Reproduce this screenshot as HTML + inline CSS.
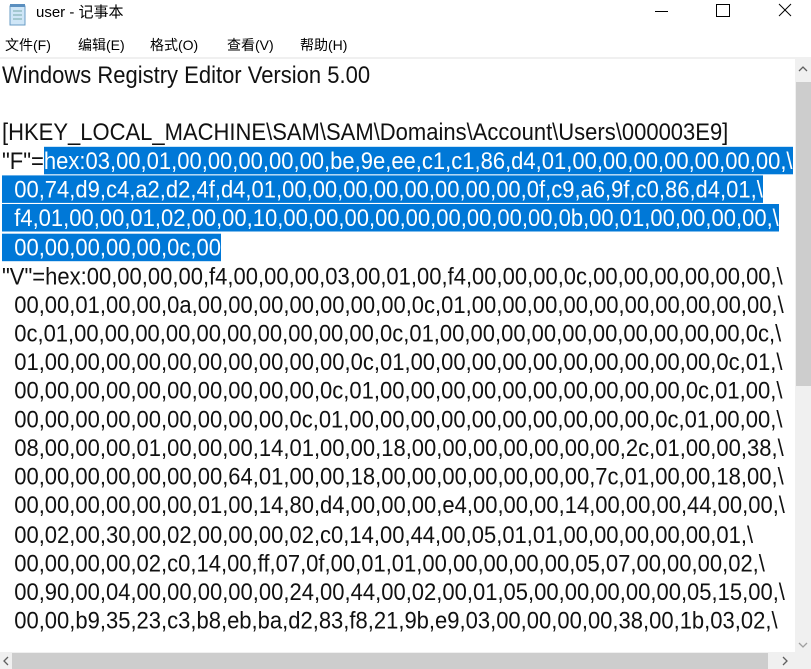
<!DOCTYPE html>
<html><head><meta charset="utf-8">
<style>
*{margin:0;padding:0;box-sizing:border-box}
body{width:811px;height:669px;background:#fff;position:relative;overflow:hidden;font-family:"Liberation Sans","Noto Sans CJK SC",sans-serif}
.title{position:absolute;left:36px;top:1px;font-size:15px;color:#000;line-height:24px}
.menu{position:absolute;top:35px;font-size:14px;color:#000;line-height:20px}
.sep{position:absolute;left:0;top:57px;width:811px;height:2px;background:#f0f0f0}
.ed{position:absolute;left:2px;top:61px;font-size:22px;line-height:26.1px;white-space:pre;color:#111;transform:scaleY(1.1);transform-origin:0 0}
.sel{background:#0078d7;color:#fff}
.vs{position:absolute;left:795px;top:59px;width:16px;height:593px;background:#f0f0f0}
.vt{position:absolute;left:796px;top:82px;width:15px;height:304px;background:#cdcdcd}
.hs{position:absolute;left:0;top:652px;width:795px;height:17px;background:#f0f0f0}
.ht{position:absolute;left:12px;top:653px;width:756px;height:16px;background:#cdcdcd}
.corner{position:absolute;left:795px;top:652px;width:16px;height:17px;background:#f0f0f0}
</style></head><body>
<svg style="position:absolute;left:8px;top:4px" width="20" height="22" viewBox="0 0 20 22">
<rect x="2" y="2" width="15" height="19" fill="#cfe6f7" stroke="#6a9cc4"/>
<line x1="5" y1="7" x2="14" y2="7" stroke="#7aa" /><line x1="5" y1="11" x2="14" y2="11" stroke="#7aa"/><line x1="5" y1="15" x2="14" y2="15" stroke="#7aa"/>
<rect x="2" y="0" width="15" height="3" fill="#5b8fbf"/>
</svg>
<div class="title">user - 记事本</div>
<svg style="position:absolute;left:650px;top:0" width="161" height="24">
<line x1="5" y1="11.5" x2="18" y2="11.5" stroke="#000" stroke-width="1"/>
<rect x="66.5" y="4.5" width="13" height="12" fill="none" stroke="#000"/>
<line x1="129" y1="4" x2="141" y2="16" stroke="#000"/><line x1="141" y1="4" x2="129" y2="16" stroke="#000"/>
</svg>
<div class="menu" style="left:5px">文件(F)</div>
<div class="menu" style="left:78px">编辑(E)</div>
<div class="menu" style="left:150px">格式(O)</div>
<div class="menu" style="left:227px">查看(V)</div>
<div class="menu" style="left:300px">帮助(H)</div>
<div class="sep"></div>
<div class="ed">Windows Registry Editor Version 5.00

[HKEY_LOCAL_MACHINE\SAM\SAM\Domains\Account\Users\000003E9]
"F"=<span class="sel">hex:03,00,01,00,00,00,00,00,be,9e,ee,c1,c1,86,d4,01,00,00,00,00,00,00,00,\</span>
<span class="sel">  00,74,d9,c4,a2,d2,4f,d4,01,00,00,00,00,00,00,00,00,0f,c9,a6,9f,c0,86,d4,01,\</span>
<span class="sel">  f4,01,00,00,01,02,00,00,10,00,00,00,00,00,00,00,00,00,0b,00,01,00,00,00,00,\</span>
<span class="sel">  00,00,00,00,00,0c,00</span>
"V"=hex:00,00,00,00,f4,00,00,00,03,00,01,00,f4,00,00,00,0c,00,00,00,00,00,00,\
  00,00,01,00,00,0a,00,00,00,00,00,00,00,0c,01,00,00,00,00,00,00,00,00,00,00,\
  0c,01,00,00,00,00,00,00,00,00,00,00,0c,01,00,00,00,00,00,00,00,00,00,00,0c,\
  01,00,00,00,00,00,00,00,00,00,00,0c,01,00,00,00,00,00,00,00,00,00,00,0c,01,\
  00,00,00,00,00,00,00,00,00,00,0c,01,00,00,00,00,00,00,00,00,00,00,0c,01,00,\
  00,00,00,00,00,00,00,00,00,0c,01,00,00,00,00,00,00,00,00,00,00,0c,01,00,00,\
  08,00,00,00,01,00,00,00,14,01,00,00,18,00,00,00,00,00,00,00,2c,01,00,00,38,\
  00,00,00,00,00,00,00,64,01,00,00,18,00,00,00,00,00,00,00,7c,01,00,00,18,00,\
  00,00,00,00,00,00,01,00,14,80,d4,00,00,00,e4,00,00,00,14,00,00,00,44,00,00,\
  00,02,00,30,00,02,00,00,00,02,c0,14,00,44,00,05,01,01,00,00,00,00,00,01,\
  00,00,00,00,02,c0,14,00,ff,07,0f,00,01,01,00,00,00,00,00,05,07,00,00,00,02,\
  00,90,00,04,00,00,00,00,00,24,00,44,00,02,00,01,05,00,00,00,00,00,05,15,00,\
  00,00,b9,35,23,c3,b8,eb,ba,d2,83,f8,21,9b,e9,03,00,00,00,00,38,00,1b,03,02,\</div>
<div class="vs"></div><div class="vt"></div>
<svg style="position:absolute;left:797px;top:64px" width="12" height="10"><polyline points="2,7 6,3 10,7" fill="none" stroke="#606060" stroke-width="1.3"/></svg>
<svg style="position:absolute;left:797px;top:640px" width="12" height="10"><polyline points="2,3 6,7 10,3" fill="none" stroke="#a0a0a0" stroke-width="1.3"/></svg>
<div class="hs"></div><div class="ht"></div><div class="corner"></div>
<svg style="position:absolute;left:1px;top:655px" width="10" height="12"><polyline points="7,2 3,6 7,10" fill="none" stroke="#606060" stroke-width="1.3"/></svg>
<svg style="position:absolute;left:780px;top:655px" width="10" height="12"><polyline points="3,2 7,6 3,10" fill="none" stroke="#606060" stroke-width="1.3"/></svg>
</body></html>
